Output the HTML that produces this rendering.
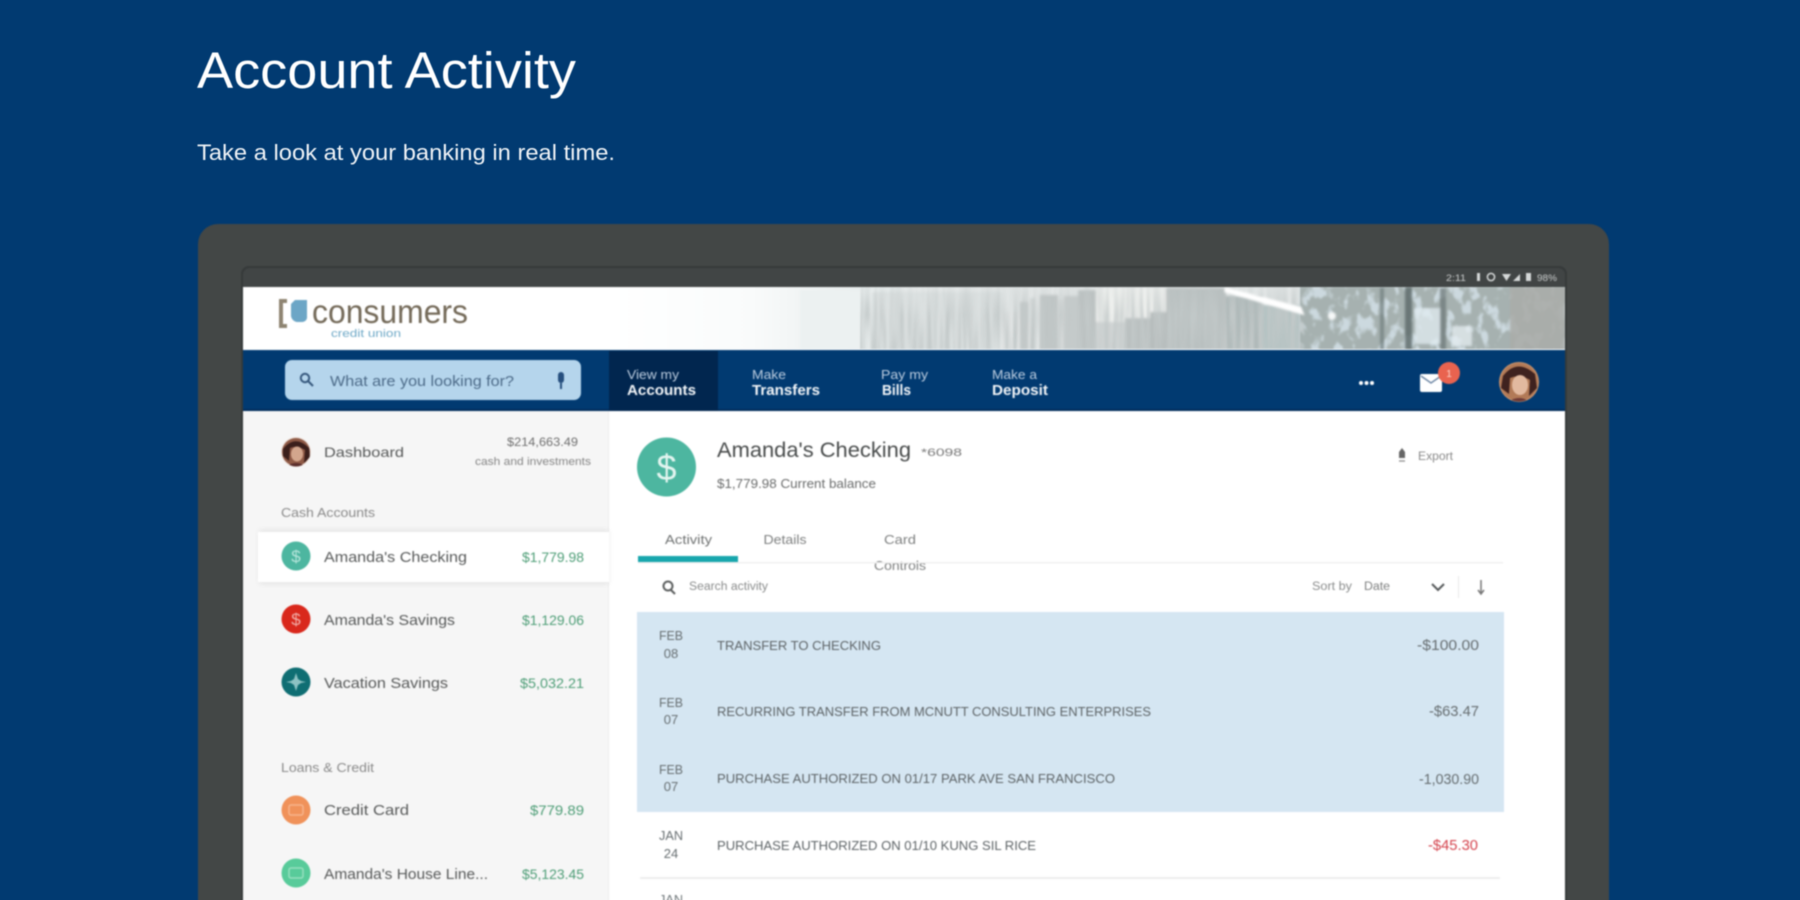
<!DOCTYPE html>
<html lang="en">
<head>
<meta charset="utf-8">
<title>Account Activity</title>
<style>
html,body{margin:0;padding:0;width:1800px;height:900px;overflow:hidden;background:#013a71}
svg{display:block;position:absolute;left:0;top:0}
text{font-family:"Liberation Sans",sans-serif}
.soft{filter:blur(.5px)}
.app{filter:blur(.9px)}
</style>
</head>
<body>
<svg xmlns="http://www.w3.org/2000/svg" width="1800" height="900" viewBox="0 0 1800 900">
<defs>
<filter id="b2" x="-5%" y="-20%" width="110%" height="140%"><feGaussianBlur stdDeviation="1.2"/></filter>
<filter id="b1" x="-30%" y="-30%" width="160%" height="160%"><feGaussianBlur stdDeviation="1"/></filter>
<filter id="sh" x="-10%" y="-40%" width="120%" height="180%"><feGaussianBlur stdDeviation="3"/></filter>
<filter id="vbars" x="0" y="0" width="100%" height="100%">
<feTurbulence type="fractalNoise" baseFrequency="0.22 0.012" numOctaves="2" seed="3"/>
<feColorMatrix type="matrix" values="0 0 0 0 0.54  0 0 0 0 0.58  0 0 0 0 0.58  2.2 0 0 0 -0.65"/>
<feGaussianBlur stdDeviation="0.7"/>
</filter>
<filter id="leaf" x="0" y="0" width="100%" height="100%">
<feTurbulence type="fractalNoise" baseFrequency="0.09 0.06" numOctaves="3" seed="7"/>
<feColorMatrix type="matrix" values="0 0 0 0 0.38  0 0 0 0 0.44  0 0 0 0 0.43  6 0 0 0 -2"/>
<feGaussianBlur stdDeviation="0.8"/>
</filter>
<linearGradient id="fade" x1="0" x2="1" y1="0" y2="0">
<stop offset="0" stop-color="#fff"/><stop offset=".5" stop-color="#f9fbfb"/><stop offset="1" stop-color="#e2e8e8"/>
</linearGradient>
<linearGradient id="vm" x1="0" x2="0" y1="0" y2="1">
<stop offset="0" stop-color="#fff" stop-opacity=".3"/><stop offset=".45" stop-color="#fff" stop-opacity="1"/>
</linearGradient>
<mask id="vmask"><rect x="860" y="287" width="445" height="63" fill="url(#vm)"/></mask>
<clipPath id="band"><rect x="243" y="287" width="1322" height="62"/></clipPath>
<clipPath id="av1"><circle cx="1519" cy="382" r="19.5"/></clipPath>
<clipPath id="av2"><circle cx="296" cy="452" r="14.5"/></clipPath>
</defs>

<rect width="1800" height="900" fill="#013a71"/>
<g class="soft">
<text x="197" y="88" font-size="51" fill="#fff" textLength="379" lengthAdjust="spacingAndGlyphs">Account Activity</text>
<text x="197" y="160" font-size="22" fill="#eef2f6" textLength="418" lengthAdjust="spacingAndGlyphs">Take a look at your banking in real time.</text>
</g>

<g class="app">
<!-- device -->
<path d="M198 904V244a20 20 0 0 1 20-20H1589a20 20 0 0 1 20 20V904Z" fill="#434746"/>
<path d="M241 904V274a8 8 0 0 1 8-8H1559a8 8 0 0 1 8 8V904Z" fill="#363a3a"/>
<path d="M243 287V275a7 7 0 0 1 7-7H1558a7 7 0 0 1 7 7V287Z" fill="#414545"/>
<text x="1446" y="281" font-size="9" fill="#c9cccc" textLength="20" lengthAdjust="spacingAndGlyphs">2:11</text>
<g fill="#d5d8d8">
<rect x="1477" y="273" width="3" height="8"/>
<circle cx="1491" cy="277" r="3.6" fill="none" stroke="#d5d8d8" stroke-width="1.5"/>
<path d="M1502 274h9l-4.500 7z"/>
<path d="M1513 281l7-7v7z"/>
<rect x="1526" y="273" width="5" height="8"/>
</g>
<text x="1537" y="281" font-size="9" fill="#c9cccc" textLength="20" lengthAdjust="spacingAndGlyphs">98%</text>

<!-- white screen -->
<rect x="243" y="287" width="1322" height="617" fill="#fff"/>

<!-- header image -->
<g clip-path="url(#band)">
<rect x="600" y="287" width="300" height="63" fill="url(#fade)"/>
<rect x="900" y="287" width="665" height="63" fill="#e3e7e7"/>
<g filter="url(#b2)">
<rect x="800" y="290" width="75" height="60" fill="#ecf1f1"/>
<rect x="872" y="292" width="130" height="58" fill="#dce1e1"/>
<rect x="1000" y="312" width="20" height="38" fill="#e2e5e5"/>
<rect x="1020" y="302" width="8" height="48" fill="#c3c8c8"/><rect x="1030" y="298" width="5" height="52" fill="#cfd4d4"/>
<rect x="1040" y="295" width="18" height="55" fill="#bfc5c5"/><rect x="1058" y="300" width="6" height="50" fill="#dde0e0"/>
<rect x="1064" y="296" width="14" height="54" fill="#c6cbcb"/>
<rect x="1078" y="290" width="18" height="60" fill="#bcc2c2"/>
<rect x="1096" y="288" width="70" height="35" fill="#eef0ee"/>
<rect x="1096" y="322" width="70" height="28" fill="#d2d6d6"/>
<rect x="1125" y="318" width="40" height="32" fill="#bac0c0"/>
<rect x="1150" y="312" width="18" height="38" fill="#b6bcbc"/>
<rect x="1166" y="288" width="60" height="62" fill="#b9c0c0"/>
<rect x="1226" y="296" width="36" height="54" fill="#b0baba"/>
<rect x="1262" y="305" width="38" height="45" fill="#b5c3c3"/>
<rect x="1300" y="287" width="265" height="63" fill="#ccd9df"/>
</g>
<rect x="860" y="287" width="445" height="63" filter="url(#vbars)" mask="url(#vmask)"/>
<rect x="1300" y="287" width="265" height="63" filter="url(#leaf)"/>
<g filter="url(#b1)">
<rect x="1510" y="287" width="55" height="63" fill="#aaaca8" opacity=".9"/>
<rect x="1415" y="308" width="26" height="36" fill="#e2ecf1" opacity=".75"/>
<rect x="1452" y="326" width="20" height="20" fill="#e6edf1" opacity=".75"/>
<rect x="1405" y="287" width="7" height="63" fill="#5f6c6c" opacity=".85"/>
<rect x="1440" y="288" width="6" height="62" fill="#6c7878" opacity=".75"/>
<rect x="1380" y="288" width="4" height="62" fill="#707d7d" opacity=".75"/>
<path d="M1226 289L1300 308L1302 313L1226 291Z" fill="#fff" stroke="#fff" stroke-width="3"/>
<circle cx="1332" cy="316" r="4" fill="#f6f8f8"/>
</g>
</g>

<!-- logo -->
<path d="M287 301H281V326H287" fill="none" stroke="#8e8471" stroke-width="4"/>
<path d="M295 300H307V316a5 5 0 0 1-5 6h-4a7 7 0 0 1-7-6V304Z" fill="#6ca6c6"/>
<text x="312" y="323" font-size="33" fill="#746a59" textLength="156" lengthAdjust="spacingAndGlyphs">consumers</text>
<text x="331" y="337" font-size="11" fill="#6fa9c7" textLength="70" lengthAdjust="spacingAndGlyphs">credit union</text>

<!-- nav -->
<rect x="243" y="350" width="1322" height="61" fill="#013a71"/>
<rect x="243" y="409" width="1322" height="2" fill="#012d5c"/>
<rect x="609" y="351" width="109" height="60" fill="#01264f"/>
<rect x="285" y="360" width="296" height="40" rx="7" fill="#b5d5ec"/>
<g fill="none" stroke="#35577c" stroke-width="2">
<circle cx="305" cy="378" r="4.200"/><path d="M308 381l5 5"/>
</g>
<text x="330" y="386" font-size="14.500" fill="#4c6a88" textLength="184" lengthAdjust="spacingAndGlyphs">What are you looking for?</text>
<rect x="558" y="372" width="6" height="11" rx="3" fill="#264f7e"/><path d="M561 383v6" stroke="#264f7e" stroke-width="2"/>

<text x="627" y="379" font-size="12.500" fill="#bccde0" textLength="52" lengthAdjust="spacingAndGlyphs">View my</text>
<text x="627" y="395" font-size="14.500" font-weight="bold" fill="#f2f5f8" textLength="69" lengthAdjust="spacingAndGlyphs">Accounts</text>
<text x="752" y="379" font-size="12.500" fill="#bccde0" textLength="34" lengthAdjust="spacingAndGlyphs">Make</text>
<text x="752" y="395" font-size="14.500" font-weight="bold" fill="#f2f5f8" textLength="68" lengthAdjust="spacingAndGlyphs">Transfers</text>
<text x="881" y="379" font-size="12.500" fill="#bccde0" textLength="47" lengthAdjust="spacingAndGlyphs">Pay my</text>
<text x="882" y="395" font-size="14.500" font-weight="bold" fill="#f2f5f8" textLength="29" lengthAdjust="spacingAndGlyphs">Bills</text>
<text x="992" y="379" font-size="12.500" fill="#bccde0" textLength="45" lengthAdjust="spacingAndGlyphs">Make a</text>
<text x="992" y="395" font-size="14.500" font-weight="bold" fill="#f2f5f8" textLength="56" lengthAdjust="spacingAndGlyphs">Deposit</text>

<g fill="#fff"><circle cx="1361" cy="383" r="2"/><circle cx="1366.500" cy="383" r="2"/><circle cx="1372" cy="383" r="2"/></g>
<rect x="1420" y="374" width="22" height="18" rx="2" fill="#fff"/>
<path d="M1421 376l10 7 10-7" fill="none" stroke="#6f88a5" stroke-width="1.500"/>
<circle cx="1449" cy="373" r="11" fill="#e9634f"/>
<text x="1449" y="377" font-size="10" fill="#f9d5cc" text-anchor="middle">1</text>

<!-- avatar top -->
<circle cx="1519" cy="382" r="20" fill="#c9926c"/>
<g clip-path="url(#av1)">
<circle cx="1519" cy="382" r="19" fill="#b27a57"/>
<path d="M1503 376q14-18 32-2l2 14-8 8 1-16q-10-6-20-2l-1 16-8-6z" fill="#3f221f"/>
<ellipse cx="1520" cy="385" rx="8" ry="10" fill="#e2b99f"/>
<path d="M1508 402q11-8 22 0v8h-22z" fill="#6e3a36"/>
</g>

<!-- sidebar -->
<rect x="243" y="411" width="366" height="493" fill="#f6f6f6"/>
<rect x="608" y="411" width="1" height="493" fill="#ededed"/>
<rect x="259" y="530" width="350" height="54" fill="#000" opacity=".07" filter="url(#sh)"/>
<rect x="258" y="532" width="351" height="50" fill="#fff"/>

<circle cx="296" cy="452" r="15" fill="#efe3dd"/>
<g clip-path="url(#av2)">
<circle cx="296" cy="452" r="14" fill="#8f5a46"/>
<path d="M283 449q12-15 26-1l1 9-6 6 1-13q-8-5-15-2l-1 13-6-5z" fill="#3b1f1b"/>
<ellipse cx="297" cy="454" rx="6" ry="7.500" fill="#d3a68d"/>
<path d="M287 466q9-6 18 0v5h-18z" fill="#5a2e2c"/>
</g>
<g fill="#575959">
<text x="324" y="457" font-size="14" textLength="80" lengthAdjust="spacingAndGlyphs">Dashboard</text>
<text x="507" y="446" font-size="12" fill="#6f6f6f" textLength="71" lengthAdjust="spacingAndGlyphs">$214,663.49</text>
<text x="475" y="465" font-size="11" fill="#858585" textLength="116" lengthAdjust="spacingAndGlyphs">cash and investments</text>
<text x="281" y="517" font-size="13" fill="#8a8a8a" textLength="94" lengthAdjust="spacingAndGlyphs">Cash Accounts</text>
<text x="324" y="562" font-size="14.500" textLength="143" lengthAdjust="spacingAndGlyphs">Amanda's Checking</text>
<text x="324" y="625" font-size="14.500" textLength="131" lengthAdjust="spacingAndGlyphs">Amanda's Savings</text>
<text x="324" y="688" font-size="14.500" textLength="124" lengthAdjust="spacingAndGlyphs">Vacation Savings</text>
<text x="281" y="772" font-size="13" fill="#8a8a8a" textLength="93" lengthAdjust="spacingAndGlyphs">Loans &amp; Credit</text>
<text x="324" y="815" font-size="14.500" textLength="85" lengthAdjust="spacingAndGlyphs">Credit Card</text>
<text x="324" y="879" font-size="14.500" textLength="164" lengthAdjust="spacingAndGlyphs">Amanda's House Line...</text>
</g>
<g fill="#4d9d76" font-size="14">
<text x="522" y="562" textLength="62" lengthAdjust="spacingAndGlyphs">$1,779.98</text>
<text x="522" y="625" textLength="62" lengthAdjust="spacingAndGlyphs">$1,129.06</text>
<text x="520" y="688" textLength="64" lengthAdjust="spacingAndGlyphs">$5,032.21</text>
<text x="530" y="815" textLength="54" lengthAdjust="spacingAndGlyphs">$779.89</text>
<text x="522" y="879" textLength="62" lengthAdjust="spacingAndGlyphs">$5,123.45</text>
</g>

<circle cx="296" cy="556" r="14.500" fill="#4db6a0"/>
<text x="296" y="562" font-size="17" fill="#b9e6dc" text-anchor="middle">$</text>
<circle cx="296" cy="619" r="14.500" fill="#d9281c"/>
<text x="296" y="625" font-size="17" fill="#f2b3ad" text-anchor="middle">$</text>
<circle cx="296" cy="682" r="14.500" fill="#0f6e73"/>
<path d="M296 673l2 6 3 2 5 1-5 1-3 2-2 6-2-6-3-2-5-1 5-1 3-2z" fill="#8dc2c3"/>
<circle cx="296" cy="810" r="14.500" fill="#f0925a"/>
<rect x="289" y="805" width="14" height="10" rx="2" fill="none" stroke="#f6b48c" stroke-width="1.500"/>
<circle cx="296" cy="873" r="14.500" fill="#58cb9a"/>
<rect x="289" y="868" width="14" height="10" rx="2" fill="none" stroke="#97e0bf" stroke-width="1.500"/>

<!-- account header -->
<circle cx="666.500" cy="467" r="29.500" fill="#4db6a0"/>
<text x="666.500" y="480" font-size="36" fill="#e3f5f0" text-anchor="middle">$</text>
<text x="717" y="457" font-size="21" fill="#484b4b" textLength="194" lengthAdjust="spacingAndGlyphs">Amanda's Checking</text>
<text x="921" y="456" font-size="11" fill="#777" textLength="41" lengthAdjust="spacingAndGlyphs">*6098</text>
<text x="717" y="488" font-size="13" fill="#6a6c6c" textLength="159" lengthAdjust="spacingAndGlyphs">$1,779.98 Current balance</text>
<path d="M1399 452l3-4 3 4v6h-6z" fill="#666"/><path d="M1399 461h6" stroke="#999" stroke-width="1.500"/>
<text x="1418" y="460" font-size="11.500" fill="#888" textLength="35" lengthAdjust="spacingAndGlyphs">Export</text>

<!-- tabs -->
<text x="665" y="544" font-size="13" fill="#6f7272" textLength="47" lengthAdjust="spacingAndGlyphs">Activity</text>
<text x="763.500" y="544" font-size="13" fill="#7d7f7f" textLength="43" lengthAdjust="spacingAndGlyphs">Details</text>
<text x="884" y="544" font-size="13" fill="#7d7f7f" textLength="32" lengthAdjust="spacingAndGlyphs">Card</text>
<text x="874" y="570" font-size="13" fill="#7d7f7f" textLength="52" lengthAdjust="spacingAndGlyphs">Controls</text>
<rect x="638" y="562" width="865" height="1.500" fill="#efefef"/>
<rect x="638" y="556" width="100" height="6" fill="#17a6ad"/>

<!-- search row -->
<g fill="none" stroke="#5c5f5f" stroke-width="2"><circle cx="668" cy="586" r="4.500"/><path d="M671 590l4 4"/></g>
<text x="689" y="590" font-size="11.500" fill="#8a8c8c" textLength="79" lengthAdjust="spacingAndGlyphs">Search activity</text>
<text x="1312" y="590" font-size="11.500" fill="#8a8c8c" textLength="40" lengthAdjust="spacingAndGlyphs">Sort by</text>
<text x="1364" y="590" font-size="11.500" fill="#7d7f7f" textLength="26" lengthAdjust="spacingAndGlyphs">Date</text>
<path d="M1432 584l6 6 6-6" fill="none" stroke="#55585a" stroke-width="2"/>
<rect x="1458" y="576" width="1" height="22" fill="#e8e8e8"/>
<path d="M1481 580v14M1478 590l3 4 3-4" fill="none" stroke="#777" stroke-width="1.500"/>

<!-- transactions -->
<rect x="637" y="612" width="867" height="200" fill="#d5e6f2"/>
<g fill="#666d70" font-size="13" text-anchor="middle">
<text x="671" y="640" textLength="24" lengthAdjust="spacingAndGlyphs">FEB</text><text x="671" y="658">08</text>
<text x="671" y="707" textLength="24" lengthAdjust="spacingAndGlyphs">FEB</text><text x="671" y="724">07</text>
<text x="671" y="774" textLength="24" lengthAdjust="spacingAndGlyphs">FEB</text><text x="671" y="791">07</text>
<text x="671" y="840" textLength="24" lengthAdjust="spacingAndGlyphs">JAN</text><text x="671" y="858">24</text>
</g>
<g fill="#5d6366" font-size="12.500">
<text x="717" y="650" textLength="164" lengthAdjust="spacingAndGlyphs">TRANSFER TO CHECKING</text>
<text x="717" y="716" textLength="434" lengthAdjust="spacingAndGlyphs">RECURRING TRANSFER FROM MCNUTT CONSULTING ENTERPRISES</text>
<text x="717" y="783" textLength="398" lengthAdjust="spacingAndGlyphs">PURCHASE AUTHORIZED ON 01/17 PARK AVE SAN FRANCISCO</text>
<text x="717" y="850" textLength="319" lengthAdjust="spacingAndGlyphs">PURCHASE AUTHORIZED ON 01/10 KUNG SIL RICE</text>
</g>
<g fill="#666d70" font-size="14.500">
<text x="1417" y="650" textLength="62" lengthAdjust="spacingAndGlyphs">-$100.00</text>
<text x="1429" y="716" textLength="50" lengthAdjust="spacingAndGlyphs">-$63.47</text>
<text x="1419" y="784" textLength="60" lengthAdjust="spacingAndGlyphs">-1,030.90</text>
<text x="1428" y="850" font-size="14.500" fill="#d4424c" textLength="50" lengthAdjust="spacingAndGlyphs">-$45.30</text>
</g>
<rect x="640" y="877" width="860" height="2" fill="#eeeeee"/>
<text x="671" y="904" font-size="13" fill="#6f7679" text-anchor="middle" textLength="24" lengthAdjust="spacingAndGlyphs">JAN</text>
</g>
</svg>
</body>
</html>
